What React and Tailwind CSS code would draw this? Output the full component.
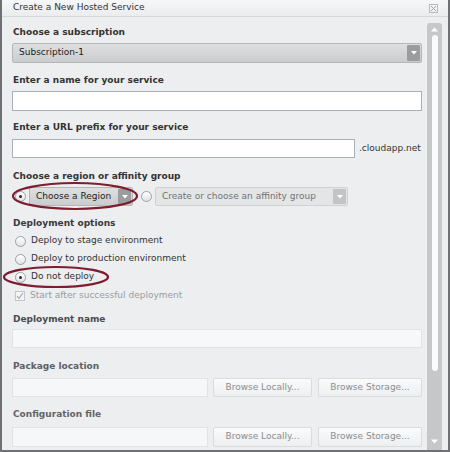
import React from 'react';

const font = { fontFamily: '"DejaVu Sans", Verdana, sans-serif' };

// Small grey dropdown with a darker arrow box on the right
const Select = ({ label, className = '', muted = false }) => (
  <div
    className={`flex h-full items-stretch rounded-[2px] border ${
      muted ? 'border-[#cfd1d3] bg-[#e4e5e6]' : 'border-[#b4b6b8] bg-gradient-to-b from-[#dedfe0] to-[#cbcccd]'
    } ${className}`}
  >
    <span className={`flex-1 pl-[6px] leading-[17px] ${muted ? 'text-[#6f7375]' : 'text-[#222]'}`}>{label}</span>
    <span
      className={`my-[1px] mr-[1px] flex w-[13px] items-center justify-center rounded-[1px] ${
        muted ? 'bg-[#c2c4c6]' : 'bg-[#9a9c9e]'
      }`}
    >
      <svg width="6" height="4" viewBox="0 0 6 4">
        <path d="M0 0h6L3 3.5z" fill="#fff" />
      </svg>
    </span>
  </div>
);

const Radio = ({ checked }) => (
  <span className="flex h-[11px] w-[11px] shrink-0 items-center justify-center rounded-full border border-[#9da1a4] bg-gradient-to-b from-[#ffffff] to-[#dfe2e5]">
    {checked && <span className="h-[3px] w-[3px] rounded-full bg-[#2a2a2a]" />}
  </span>
);

const Label = ({ children, className = '' }) => (
  <div className={`h-[12px] pl-[1px] text-[9px] font-bold leading-[12px] ${className}`}>{children}</div>
);

const BrowseButton = ({ children, className = '' }) => (
  <div
    className={`flex h-full items-center justify-center rounded-[2px] border border-[#d9dbdd] bg-gradient-to-b from-[#fbfbfc] to-[#eceef0] text-[#8a8d90] ${className}`}
  >
    {children}
  </div>
);

export default function App() {
  return (
    <div
      className="relative flex h-[452px] w-[450px] flex-col overflow-hidden border-x-2 border-b-2 border-[#6e7073] bg-[#eceef0] text-[9px]"
      style={font}
    >
      {/* title bar */}
      <div className="flex h-[17px] shrink-0 items-center justify-between border-b border-[#d5d8db] bg-gradient-to-b from-[#f6f7f8] to-[#eaecee] pl-[11px] pr-[10px]">
        <span className="text-[#333]">Create a New Hosted Service</span>
        <svg width="9" height="9" viewBox="0 0 9 9" className="mt-[1px]">
          <rect x="0.5" y="0.5" width="8" height="8" fill="none" stroke="#b8babc" />
          <path d="M2 2l5 5M7 2L2 7" stroke="#a4a6a8" />
        </svg>
      </div>

      <div className="flex flex-1 pl-[10px] pr-[6px]">
        {/* form */}
        <div className="flex w-[410px] flex-col">
          <Label className="mt-[9px] text-[#333]">Choose a subscription</Label>
          <div className="mt-[5px] h-[20px]">
            <Select label="Subscription-1" />
          </div>

          <Label className="mt-[11px] text-[#333]">Enter a name for your service</Label>
          <div className="mt-[5px] h-[20px] border border-[#a7b0b8] bg-white" />

          <Label className="mt-[10px] text-[#333]">Enter a URL prefix for your service</Label>
          <div className="mt-[6px] flex h-[19px] items-center">
            <div className="h-full w-[343px] border border-[#a7b0b8] bg-white" />
            <span className="ml-[4px] text-[#333]">.cloudapp.net</span>
          </div>

          <Label className="mt-[12px] text-[#333]">Choose a region or affinity group</Label>
          <div className="mt-[5px] flex h-[19px] items-center">
            <span className="ml-[3px]">
              <Radio checked />
            </span>
            <div className="ml-[3px] h-full w-[104px]">
              <Select label="Choose a Region" />
            </div>
            <span className="ml-[8px]">
              <Radio />
            </span>
            <div className="ml-[3px] h-full w-[193px]">
              <Select label="Create or choose an affinity group" muted />
            </div>
          </div>

          <Label className="mt-[11px] text-[#3a3a3a]">Deployment options</Label>
          <div className="mt-[3px] flex h-[18px] items-center gap-[5px] pl-[3px] text-[#333]">
            <Radio />
            <span>Deploy to stage environment</span>
          </div>
          <div className="flex h-[18px] items-center gap-[5px] pl-[3px] text-[#333]">
            <Radio />
            <span>Deploy to production environment</span>
          </div>
          <div className="flex h-[18px] items-center gap-[5px] pl-[3px] text-[#333]">
            <Radio checked />
            <span>Do not deploy</span>
          </div>
          <div className="mt-[1px] flex h-[18px] items-center gap-[5px] pl-[3px] text-[#9a9c9e]">
            <span className="flex h-[10px] w-[10px] items-center justify-center border border-[#c4c6c8] bg-[#f2f3f4]">
              <svg width="8" height="8" viewBox="0 0 8 8">
                <path d="M1 4.2l2 2.2L7 1" fill="none" stroke="#a8aaac" strokeWidth="1.2" />
              </svg>
            </span>
            <span>Start after successful deployment</span>
          </div>

          <Label className="mt-[8px] text-[#4a4c4e]">Deployment name</Label>
          <div className="mt-[4px] h-[19px] border border-[#e1e3e5] bg-[#f7f8f9]" />

          <Label className="mt-[12px] text-[#5e6062]">Package location</Label>
          <div className="mt-[6px] flex h-[19px] gap-[5px]">
            <div className="h-full w-[196px] border border-[#e1e3e5] bg-[#f6f7f8]" />
            <BrowseButton className="w-[99px]">Browse Locally...</BrowseButton>
            <BrowseButton className="ml-[1px] w-[104px]">Browse Storage...</BrowseButton>
          </div>

          <Label className="mt-[11px] text-[#636567]">Configuration file</Label>
          <div className="mt-[7px] flex h-[20px] gap-[5px]">
            <div className="h-full w-[196px] border border-[#e1e3e5] bg-[#f6f7f8]" />
            <BrowseButton className="w-[99px]">Browse Locally...</BrowseButton>
            <BrowseButton className="ml-[1px] w-[104px]">Browse Storage...</BrowseButton>
          </div>
        </div>

        {/* scrollbar */}
        <div className="ml-[5px] mt-[6px] flex w-[15px] flex-col items-center rounded-t-[3px] bg-[#c6c7c8] pb-[6px] pt-[4px]">
          <svg width="7" height="5" viewBox="0 0 7 5">
            <path d="M0 4.5h7L3.5 0.5z" fill="#fff" />
          </svg>
          <div className="mt-[3px] h-[336px] w-[6px] rounded-[3px] bg-[#fbfbfb]" />
          <div className="flex-1" />
          <svg width="7" height="5" viewBox="0 0 7 5">
            <path d="M0 0.5h7L3.5 4.5z" fill="#fff" />
          </svg>
        </div>
      </div>

      {/* red highlight marks drawn over the form */}
      <svg className="pointer-events-none absolute left-[-2px] top-0" width="450" height="452">
        <ellipse cx="75" cy="196" rx="62" ry="13" fill="none" stroke="#7d1d2e" strokeWidth="2.2" />
        <ellipse cx="56" cy="277" rx="52" ry="10" fill="none" stroke="#7d1d2e" strokeWidth="2.2" />
      </svg>
    </div>
  );
}
